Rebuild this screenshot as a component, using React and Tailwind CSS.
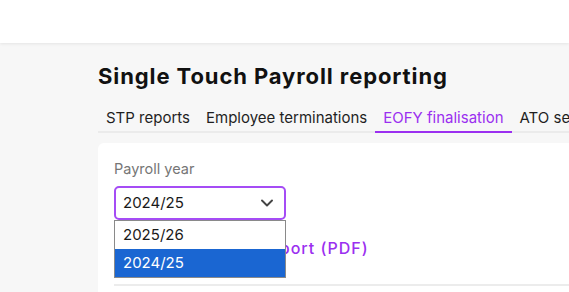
import { ChevronDown } from 'lucide-react';

const tabs = ['STP reports', 'Employee terminations', 'EOFY finalisation', 'ATO settings'];

export default function App() {
  const active = 'EOFY finalisation';

  return (
    <div className="h-screen bg-[#f7f7f7] font-['Inter',sans-serif] text-[#1a1a1a] overflow-hidden">
      {/* Top bar */}
      <div className="h-[43px] bg-white shadow-[0_1px_3px_rgba(0,0,0,0.08)]" />

      <div className="pl-[98px]">
        <h1 className="pt-[19px] text-[22px] leading-[28px] font-bold tracking-[0.9px] text-[#111]">
          Single Touch Payroll reporting
        </h1>

        {/* Tabs */}
        <nav className="mt-[18px] flex border-b-2 border-[#ebebeb] whitespace-nowrap">
          {tabs.map(tab => (
            <button
              key={tab}
              className={
                tab === active
                  ? 'px-2 pb-[3px] text-[15px] leading-[20px] text-[#9b2ff0] border-b-2 border-[#9b2ff0] -mb-[2px]'
                  : 'px-2 pb-[3px] text-[15px] leading-[20px] text-[#1f1f1f]'
              }
            >
              {tab}
            </button>
          ))}
        </nav>

        {/* Card */}
        <div className="mt-[10px] bg-white rounded-tl-md pl-4 pt-[16px] h-[200px]">
          <label className="block text-[14.5px] leading-[20px] text-[#767676]">Payroll year</label>

          <div className="relative mt-[7px] w-[172px]">
            <div className="h-[34px] flex items-center justify-between pl-[7px] pr-[7px] border-2 border-[#a54cf5] rounded-[5px] bg-white">
              <span className="text-[15px] text-[#1a1a1a]">2024/25</span>
              <ChevronDown className="w-[20px] h-[20px] text-[#444]" strokeWidth={2.3} />
            </div>

            {/* Open native select list */}
            <div className="absolute left-0 top-[34px] w-[172px] bg-white border border-[#8a8a8a] z-10">
              <div className="h-[28px] flex items-center pl-[8px] text-[15px] text-[#1a1a1a]">2025/26</div>
              <div className="h-[28px] flex items-center pl-[8px] text-[15px] text-white bg-[#1a66d2]">2024/25</div>
            </div>
          </div>

          <a className="block mt-[18px] text-[16px] leading-[21px] font-medium tracking-[1px] text-[#9b2ff0] whitespace-nowrap">
            Download yearly report (PDF)
          </a>

          <div className="mt-[25px] border-t-2 border-[#ececec]" />
        </div>
      </div>
    </div>
  );
}
